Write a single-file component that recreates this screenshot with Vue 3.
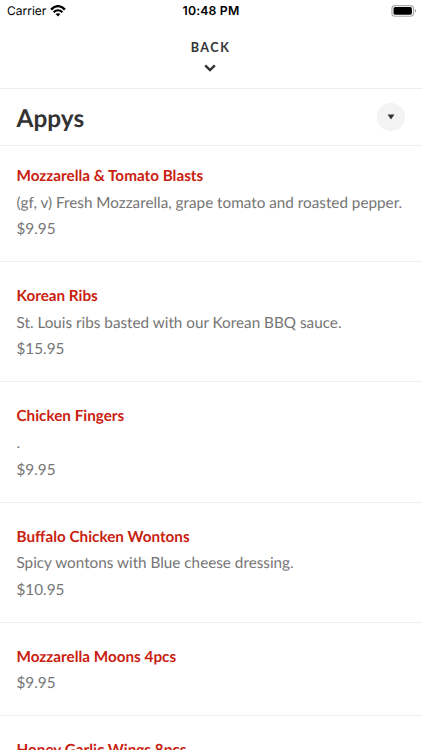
<script setup>
const items = [
  { name: 'Mozzarella & Tomato Blasts', description: '(gf, v) Fresh Mozzarella, grape tomato and roasted pepper.', price: '$9.95' },
  { name: 'Korean Ribs', description: 'St. Louis ribs basted with our Korean BBQ sauce.', price: '$15.95' },
  { name: 'Chicken Fingers', description: '.', price: '$9.95' },
  { name: 'Buffalo Chicken Wontons', description: 'Spicy wontons with Blue cheese dressing.', price: '$10.95' },
  { name: 'Mozzarella Moons 4pcs', description: '', price: '$9.95' },
  { name: 'Honey Garlic Wings 8pcs', description: '', price: '' },
]
</script>

<template>
  <div class="screen">
    <div class="status">
      <div class="carrier">
        <span class="carrier-name">Carrier</span>
        <svg class="wifi" width="16" height="12" viewBox="0 0 16 12">
          <path d="M1.1 4.6C5 0 11 0 14.9 4.6" fill="none" stroke="#000" stroke-width="2.4" />
          <path d="M3.6 7.2C6.2 4.5 9.8 4.5 12.4 7.2" fill="none" stroke="#000" stroke-width="2" />
          <path d="M5.6 9.1C7 7.8 9 7.8 10.4 9.1L8 11.5Z" fill="#000" />
        </svg>
      </div>
      <span class="time">10:48 PM</span>
      <svg class="battery" width="26" height="12" viewBox="0 0 26 12">
        <rect x="0.9" y="0.6" width="21.6" height="10.6" rx="3" fill="#fff" stroke="#aaa" stroke-width="1.1" />
        <rect x="2.5" y="2.1" width="18.4" height="7.6" rx="1.6" fill="#000" />
        <path d="M23.8 4.1C25.5 4.7 25.5 7.1 23.8 7.7Z" fill="#999" />
      </svg>
    </div>
    <button class="back">
      <span class="back-label">BACK</span>
      <svg width="12" height="8" viewBox="0 0 12 8">
        <path d="M1.2 1.4L6 6L10.8 1.4" fill="none" stroke="#333" stroke-width="2.4" />
      </svg>
    </button>
    <header class="section">
      <h1>Appys</h1>
      <button class="toggle">
        <svg width="8" height="6" viewBox="0 0 8 6"><path d="M.6 .5H7.4L4 5.6Z" fill="#333" /></svg>
      </button>
    </header>
    <ul class="menu">
      <li v-for="item in items" :key="item.name">
        <h2>{{ item.name }}</h2>
        <p v-if="item.description">{{ item.description }}</p>
        <p v-if="item.price">{{ item.price }}</p>
      </li>
    </ul>
  </div>
</template>

<style>
body { background: #fff; overflow: hidden; }
</style>

<style scoped>
.screen {
  box-sizing: border-box;
  width: 422px;
  height: 750px;
  overflow: hidden;
  background: #fff;
  color: #333;
  font-family: Lato, sans-serif;
  text-rendering: geometricPrecision;
}
.status {
  box-sizing: border-box;
  height: 22px;
  padding: 0 5px 1px 7px;
  display: grid;
  grid-template-columns: 1fr auto 1fr;
  align-items: center;
  font-family: Inter, sans-serif;
  color: #000;
}
.carrier { display: flex; align-items: center; gap: 4px; }
.carrier-name { font-size: 12px; }
.time { margin-right: 2px; font-size: 12.3px; font-weight: 600; letter-spacing: 0.15px; }
.battery { justify-self: end; }
button { border: 0; padding: 0; background: none; font-family: inherit; color: inherit; }
.back {
  width: 100%;
  height: 66px;
  padding: 18px 2px 0 0;
  display: flex;
  flex-direction: column;
  align-items: center;
  gap: 7.5px;
}
.back-label { margin-left: 1px; font-size: 12.6px; line-height: 16px; font-weight: 700; letter-spacing: 1.5px; }
.section {
  box-sizing: border-box;
  height: 58px;
  padding: 0 17px 0 16.5px;
  display: flex;
  align-items: center;
  justify-content: space-between;
  border-top: 1px solid #eee;
  border-bottom: 1px solid #eee;
}
h1 { margin: 0; padding-top: 3px; font-size: 24.4px; line-height: 32px; font-weight: 700; }
.toggle {
  width: 28px;
  height: 28px;
  border-radius: 50%;
  background: #f3f3f3;
  display: flex;
  align-items: center;
  justify-content: center;
}
.menu { margin: 0; padding: 0; list-style: none; }
li { padding: 21.1px 0 18.3px 16.5px; border-bottom: 1px solid #eee; }
li:first-child { padding-top: 17.1px; }
h2, p { margin: 0; font-size: 15.27px; line-height: 26.6px; white-space: nowrap; }
h2 { font-weight: 700; color: #c9210f; }
p { color: #757575; }
</style>
